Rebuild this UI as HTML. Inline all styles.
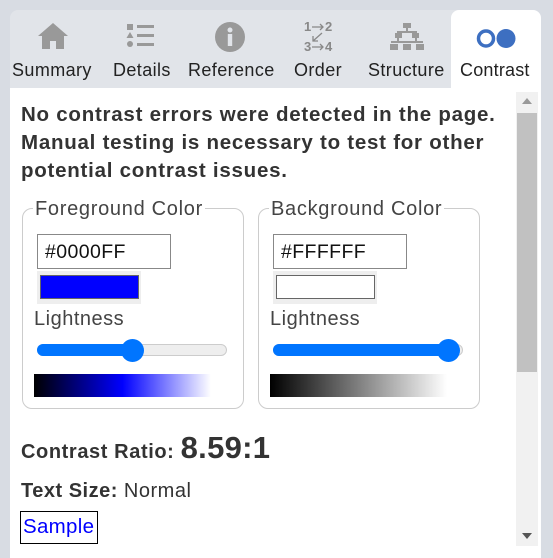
<!DOCTYPE html>
<html><head><meta charset="utf-8"><style>
*{margin:0;padding:0;box-sizing:border-box}
body{width:553px;height:546px;background:#d8dce3;font-family:"Liberation Sans",sans-serif;color:#333;position:relative;overflow:hidden}
.abs{position:absolute}
.tabs{left:10px;top:10px;width:531px;height:78px;background:#e1e4e9;border-radius:8px 8px 0 0}
.tab{position:absolute;top:60px;font-size:18px;letter-spacing:0.4px;color:#222;white-space:nowrap}
.content{left:10px;top:88px;width:531px;height:470px;background:#fff}
.sb{left:516px;top:92px;width:22px;height:454px;background:#f1f1f1}
.thumb{left:517px;top:113px;width:20px;height:259px;background:#c1c1c1}
h1{position:absolute;left:21px;top:101px;width:500px;font-size:20.5px;letter-spacing:0.75px;line-height:28px;font-weight:bold;color:#333}
.fs{position:absolute;top:208px;width:222px;height:201px;border:1px solid #ccc;border-radius:10px}
.leg{position:absolute;top:-11px;left:10px;background:#fff;padding:0 2px;font-size:20px;letter-spacing:0.7px;color:#444;line-height:22px;white-space:nowrap}
.inp{position:absolute;left:14px;top:25px;width:134px;height:35px;border:1px solid #888;font-size:19.5px;letter-spacing:0.4px;padding:6px 0 0 7px;color:#111}
.sw{position:absolute;left:14px;top:62px;width:104px;height:33px;background:#eee}
.sw div{position:absolute;left:3px;top:4px;width:99px;height:24px;border:1px solid #666}
.lt{position:absolute;left:11px;top:99px;font-size:20px;letter-spacing:0.5px;color:#444}
.track{position:absolute;left:14px;top:135px;width:190px;height:12px;border-radius:6px;background:#eee;border:1px solid #ccc}
.fill{position:absolute;left:14px;top:135px;height:12px;border-radius:6px;background:#0075ff}
.knob{position:absolute;top:130px;width:23px;height:23px;border-radius:50%;background:#0075ff}
.grad{position:absolute;left:11px;top:165px;width:177px;height:23px}
</style></head><body>
<div class="abs tabs"></div>
<div class="abs" style="left:451px;top:10px;width:90px;height:80px;background:#fff;border-radius:8px 8px 0 0"></div>
<svg class="abs" style="left:37px;top:22px" width="32" height="28" viewBox="0 0 32 28"><path d="M16 1 L31 14 H27 V27 H19 V19 H13 V27 H5 V14 H1 Z" fill="#999"/></svg>
<svg class="abs" style="left:126px;top:22px" width="32" height="28" viewBox="0 0 32 28"><rect x="1" y="2" width="6" height="6" fill="#999"/><path d="M4 10 L7.5 16 H0.5Z" fill="#999"/><circle cx="4" cy="22" r="3" fill="#999"/><rect x="11" y="3" width="17" height="3" fill="#999"/><rect x="11" y="12" width="17" height="3" fill="#999"/><rect x="11" y="21" width="17" height="3" fill="#999"/></svg>
<svg class="abs" style="left:214px;top:21px" width="32" height="32" viewBox="0 0 32 32"><circle cx="16" cy="16" r="15" fill="#999"/><circle cx="16" cy="9" r="2.5" fill="#e1e4e9"/><rect x="13.8" y="13" width="4.4" height="12" fill="#e1e4e9"/></svg>
<svg class="abs" style="left:302px;top:18px" width="34" height="36" viewBox="0 0 34 36"><g fill="#888" font-family="Liberation Sans" font-weight="bold" font-size="13"><text x="2" y="13">1</text><text x="23" y="13">2</text><text x="2" y="33">3</text><text x="23" y="33">4</text></g><g stroke="#888" stroke-width="1.3" fill="none"><path d="M10 9H21M18 6L21 9L18 12"/><path d="M10 29H21M18 26L21 29L18 32"/><path d="M20 15L11 23M11 18V23H16"/></g></svg>
<svg class="abs" style="left:390px;top:22px" width="34" height="30" viewBox="0 0 34 30"><g fill="#999"><rect x="13" y="1" width="8" height="5"/><rect x="16" y="6" width="2" height="4"/><rect x="7" y="9" width="20" height="2"/><rect x="5" y="11" width="7" height="5"/><rect x="22" y="11" width="7" height="5"/><rect x="7" y="16" width="2" height="4"/><rect x="25" y="16" width="2" height="4"/><rect x="1" y="19" width="32" height="2"/><rect x="0" y="22" width="8" height="6"/><rect x="13" y="22" width="8" height="6"/><rect x="26" y="22" width="8" height="6"/></g></svg>
<svg class="abs" style="left:476px;top:28px" width="42" height="22" viewBox="0 0 42 22"><circle cx="10" cy="10.5" r="7.5" fill="none" stroke="#3d6fc1" stroke-width="3.5"/><circle cx="30" cy="10.5" r="9.5" fill="#3d6fc1"/></svg>
<div class="tab" style="left:12px">Summary</div>
<div class="tab" style="left:113px">Details</div>
<div class="tab" style="left:188px">Reference</div>
<div class="tab" style="left:294px">Order</div>
<div class="tab" style="left:368px">Structure</div>
<div class="tab" style="left:460px;letter-spacing:0.2px">Contrast</div>
<div class="abs content"></div>
<div class="abs sb"></div>
<div class="abs thumb"></div>
<div class="abs" style="left:522px;top:98px;width:0;height:0;border:5px solid transparent;border-bottom:6px solid #999;border-top:0"></div>
<div class="abs" style="left:522px;top:533px;width:0;height:0;border:5px solid transparent;border-top:6px solid #555;border-bottom:0"></div>
<h1>No contrast errors were detected in the page. Manual testing is necessary to test for other potential contrast issues.</h1>
<div class="fs" style="left:22px">
<div class="leg">Foreground Color</div>
<div class="inp">#0000FF</div>
<div class="sw"><div style="background:#0000ff"></div></div>
<div class="lt">Lightness</div>
<div class="track"></div>
<div class="fill" style="width:100px"></div>
<div class="knob" style="left:98px"></div>
<div class="grad" style="background:linear-gradient(90deg,#000,#0000ff 50%,#fff)"></div>
</div>
<div class="fs" style="left:258px">
<div class="leg">Background Color</div>
<div class="inp">#FFFFFF</div>
<div class="sw"><div style="background:#fff"></div></div>
<div class="lt">Lightness</div>
<div class="track"></div>
<div class="fill" style="width:180px"></div>
<div class="knob" style="left:178px"></div>
<div class="grad" style="background:linear-gradient(90deg,#000,#fff)"></div>
</div>
<div class="abs" style="left:21px;top:430px;font-size:20px;letter-spacing:0.6px;font-weight:bold;color:#333;white-space:nowrap"><span>Contrast Ratio: </span><span style="font-size:31px;letter-spacing:0.3px">8.59:1</span></div>
<div class="abs" style="left:21px;top:480px;font-size:20px;letter-spacing:0.5px;color:#333"><b>Text Size:</b> Normal</div>
<div class="abs" style="left:20px;top:511px;width:78px;height:33px;border:1.5px solid #000;color:#00f;font-size:20.5px;letter-spacing:0.3px;padding:3px 0 0 2px">Sample</div>
</body></html>
